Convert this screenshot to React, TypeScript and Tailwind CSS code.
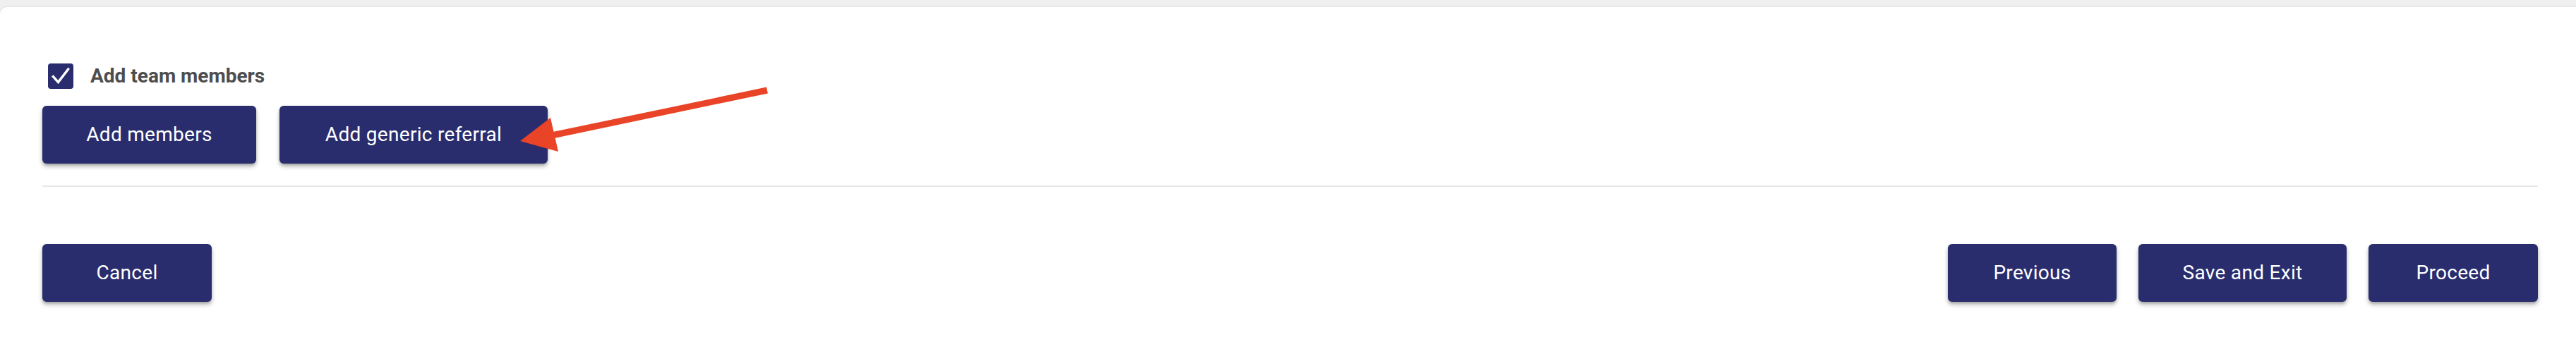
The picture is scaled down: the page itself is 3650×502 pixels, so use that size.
import React from "react";

const navy = "bg-[#292d6d]";

function Btn({ label, width }: { label: string; width: string }) {
  return (
    <button
      className={`${navy} ${width} h-[82px] rounded-[6px] text-white text-[28px] font-normal tracking-[0.3px] shadow-[0_4px_6px_rgba(0,0,0,0.28),0_2px_3px_rgba(0,0,0,0.14)] flex items-center justify-center`}
    >
      {label}
    </button>
  );
}

export default function App() {
  return (
    <div className="relative w-[3650px] h-[502px] bg-[#efefef] font-['Roboto',sans-serif] overflow-hidden">
      <div className="mt-[10px] h-[492px] bg-white rounded-tl-[10px] shadow-[0_-1px_3px_rgba(0,0,0,0.06)] pl-[60px] pr-[54px] pt-[80px]">
        <label className="flex items-center h-[36px] ml-[8px] gap-[24px]">
          <span className={`${navy} w-[36px] h-[36px] rounded-[4px] flex items-center justify-center`}>
            <svg width="34" height="34" viewBox="0 0 24 24" fill="none">
              <path d="M4.5 12.5l5 5.5L19.5 5" stroke="white" strokeWidth="2.4" strokeLinecap="square" />
            </svg>
          </span>
          <span className="text-[28px] font-bold text-[#4d4d4d]">Add team members</span>
        </label>

        <div className="flex gap-[33px] mt-[24px]">
          <Btn label="Add members" width="w-[303px]" />
          <Btn label="Add generic referral" width="w-[380px]" />
        </div>

        <div className="mt-[31px] h-[2px] bg-[#e8e8e8]" />

        <div className="flex justify-between mt-[81px]">
          <Btn label="Cancel" width="w-[240px]" />
          <div className="flex gap-[31px]">
            <Btn label="Previous" width="w-[239px]" />
            <Btn label="Save and Exit" width="w-[295px]" />
            <Btn label="Proceed" width="w-[240px]" />
          </div>
        </div>
      </div>

      {/* annotation arrow */}
      <svg className="absolute inset-0 pointer-events-none" width="3650" height="502">
        <line x1="1087" y1="128" x2="782" y2="192" stroke="#e94427" strokeWidth="9" />
        <polygon points="737,200 780,167 791,215" fill="#e94427" />
      </svg>
    </div>
  );
}
